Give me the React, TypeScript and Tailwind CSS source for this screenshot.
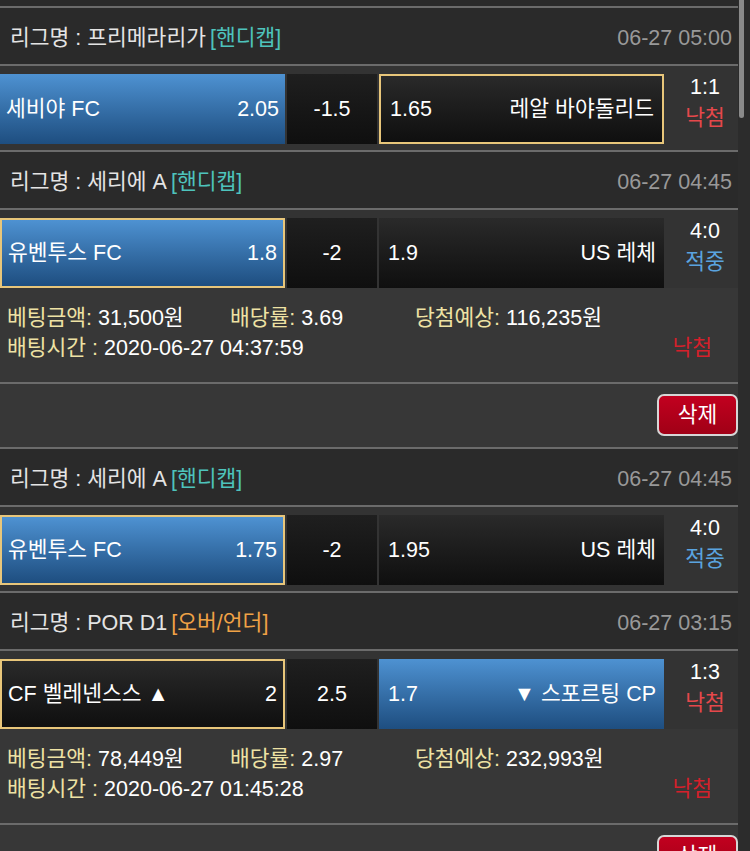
type Side = "home" | "away";

interface Match {
  league: string;
  kind: "handi" | "ou";
  date: string;
  home: string;
  homeOdds: string;
  line: string;
  awayOdds: string;
  away: string;
  score: string;
  result: "낙첨" | "적중";
  winner: Side;
  picked: Side;
}

interface Slip {
  matches: Match[];
  amount: string;
  rate: string;
  expect: string;
  time: string;
}

const slips: Slip[] = [
  {
    matches: [
      {
        league: "프리메라리가",
        kind: "handi",
        date: "06-27 05:00",
        home: "세비야 FC",
        homeOdds: "2.05",
        line: "-1.5",
        awayOdds: "1.65",
        away: "레알 바야돌리드",
        score: "1:1",
        result: "낙첨",
        winner: "home",
        picked: "away",
      },
      {
        league: "세리에 A",
        kind: "handi",
        date: "06-27 04:45",
        home: "유벤투스 FC",
        homeOdds: "1.8",
        line: "-2",
        awayOdds: "1.9",
        away: "US 레체",
        score: "4:0",
        result: "적중",
        winner: "home",
        picked: "home",
      },
    ],
    amount: "31,500원",
    rate: "3.69",
    expect: "116,235원",
    time: "2020-06-27 04:37:59",
  },
  {
    matches: [
      {
        league: "세리에 A",
        kind: "handi",
        date: "06-27 04:45",
        home: "유벤투스 FC",
        homeOdds: "1.75",
        line: "-2",
        awayOdds: "1.95",
        away: "US 레체",
        score: "4:0",
        result: "적중",
        winner: "home",
        picked: "home",
      },
      {
        league: "POR D1",
        kind: "ou",
        date: "06-27 03:15",
        home: "CF 벨레넨스스 ▲",
        homeOdds: "2",
        line: "2.5",
        awayOdds: "1.7",
        away: "▼ 스포르팅 CP",
        score: "1:3",
        result: "낙첨",
        winner: "away",
        picked: "home",
      },
    ],
    amount: "78,449원",
    rate: "2.97",
    expect: "232,993원",
    time: "2020-06-27 01:45:28",
  },
];

function Divider() {
  return <div className="h-[2px] bg-[#6b6b6b]" />;
}

function Cell({ blue, picked, children }: { blue: boolean; picked: boolean; children: React.ReactNode }) {
  return (
    <div
      className={
        "w-[285px] h-[70px] flex items-center justify-between px-[6px] " +
        (blue ? "bg-gradient-to-b from-[#4e92d2] to-[#1e4e80] " : "bg-gradient-to-b from-[#2a2a2a] to-[#0f0f0f] ") +
        (picked ? "border-2 border-[#e8c67a]" : "")
      }
    >
      {children}
    </div>
  );
}

function MatchBlock({ m, last }: { m: Match; last: boolean }) {
  return (
    <>
      <div className="h-[56px] bg-[#2a2a2a] flex items-center justify-between pt-[4px] pl-[10px] pr-[6px]">
        <div className="text-[#e4e4e4]">
          리그명 : {m.league}
          <span className={"ml-[4px] " + (m.kind === "handi" ? "text-[#4ec3bc]" : "text-[#f0a246]")}>
            {m.kind === "handi" ? "[핸디캡]" : "[오버/언더]"}
          </span>
        </div>
        <div className="text-[#999999]">{m.date}</div>
      </div>
      <Divider />
      <div className={"bg-[#333333] pt-2 " + (last ? "" : "pb-[6px]")}>
        <div className="flex gap-[2px] items-start">
          <Cell blue={m.winner === "home"} picked={m.picked === "home"}>
            <span>{m.home}</span>
            <span>{m.homeOdds}</span>
          </Cell>
          <div className="w-[90px] h-[70px] flex items-center justify-center bg-gradient-to-b from-[#1f1f1f] to-[#0f0f0f]">
            {m.line}
          </div>
          <Cell blue={m.winner === "away"} picked={m.picked === "away"}>
            <span className="pl-[3px]">{m.awayOdds}</span>
            <span className="pr-[2px]">{m.away}</span>
          </Cell>
          <div className="flex-1 flex flex-col items-center pl-[6px] leading-[31px] -mt-[2px]">
            <span>{m.score}</span>
            <span className={m.result === "낙첨" ? "text-[#e5484b]" : "text-[#5aa3df]"}>{m.result}</span>
          </div>
        </div>
      </div>
      {!last && <Divider />}
    </>
  );
}

function SlipBlock({ s }: { s: Slip }) {
  return (
    <>
      {s.matches.map((m, i) => (
        <MatchBlock key={i} m={m} last={i === s.matches.length - 1} />
      ))}
      <div className="bg-[#373737] pt-[15px] pb-[19px] pl-[7px] pr-[26px] leading-[30px]">
        <div className="flex">
          <div className="w-[223px]">
            <span className="text-[#eee2a4]">베팅금액:</span> {s.amount}
          </div>
          <div className="w-[185px]">
            <span className="text-[#eee2a4]">배당률:</span> {s.rate}
          </div>
          <div>
            <span className="text-[#eee2a4]">당첨예상:</span> {s.expect}
          </div>
        </div>
        <div className="flex justify-between">
          <div>
            <span className="text-[#eee2a4]">배팅시간 :</span> {s.time}
          </div>
          <span className="text-[#d4202b]">낙첨</span>
        </div>
      </div>
      <Divider />
      <div className="bg-[#373737] flex justify-end pt-[10px] pb-[11px]">
        <button className="w-[81px] h-[42px] rounded-[7px] border-2 border-[#d6d6d6] bg-gradient-to-b from-[#c2001f] to-[#a00016] text-white">
          삭제
        </button>
      </div>
      <Divider />
    </>
  );
}

export default function App() {
  return (
    <div className="h-[851px] overflow-hidden flex bg-[#2c2c2c] text-white text-[21.5px] font-['Liberation_Sans','Noto_Sans_CJK_KR',sans-serif]">
      <div className="w-[738px]">
        <div className="h-[6px] bg-[#2a2a2a]" />
        <Divider />
        {slips.map((s, i) => (
          <SlipBlock key={i} s={s} />
        ))}
      </div>
      <div className="flex-1 pl-[1px]">
        <div className="w-[5px] h-[118px] rounded-b-full bg-[#8a8a8a]" />
      </div>
    </div>
  );
}
